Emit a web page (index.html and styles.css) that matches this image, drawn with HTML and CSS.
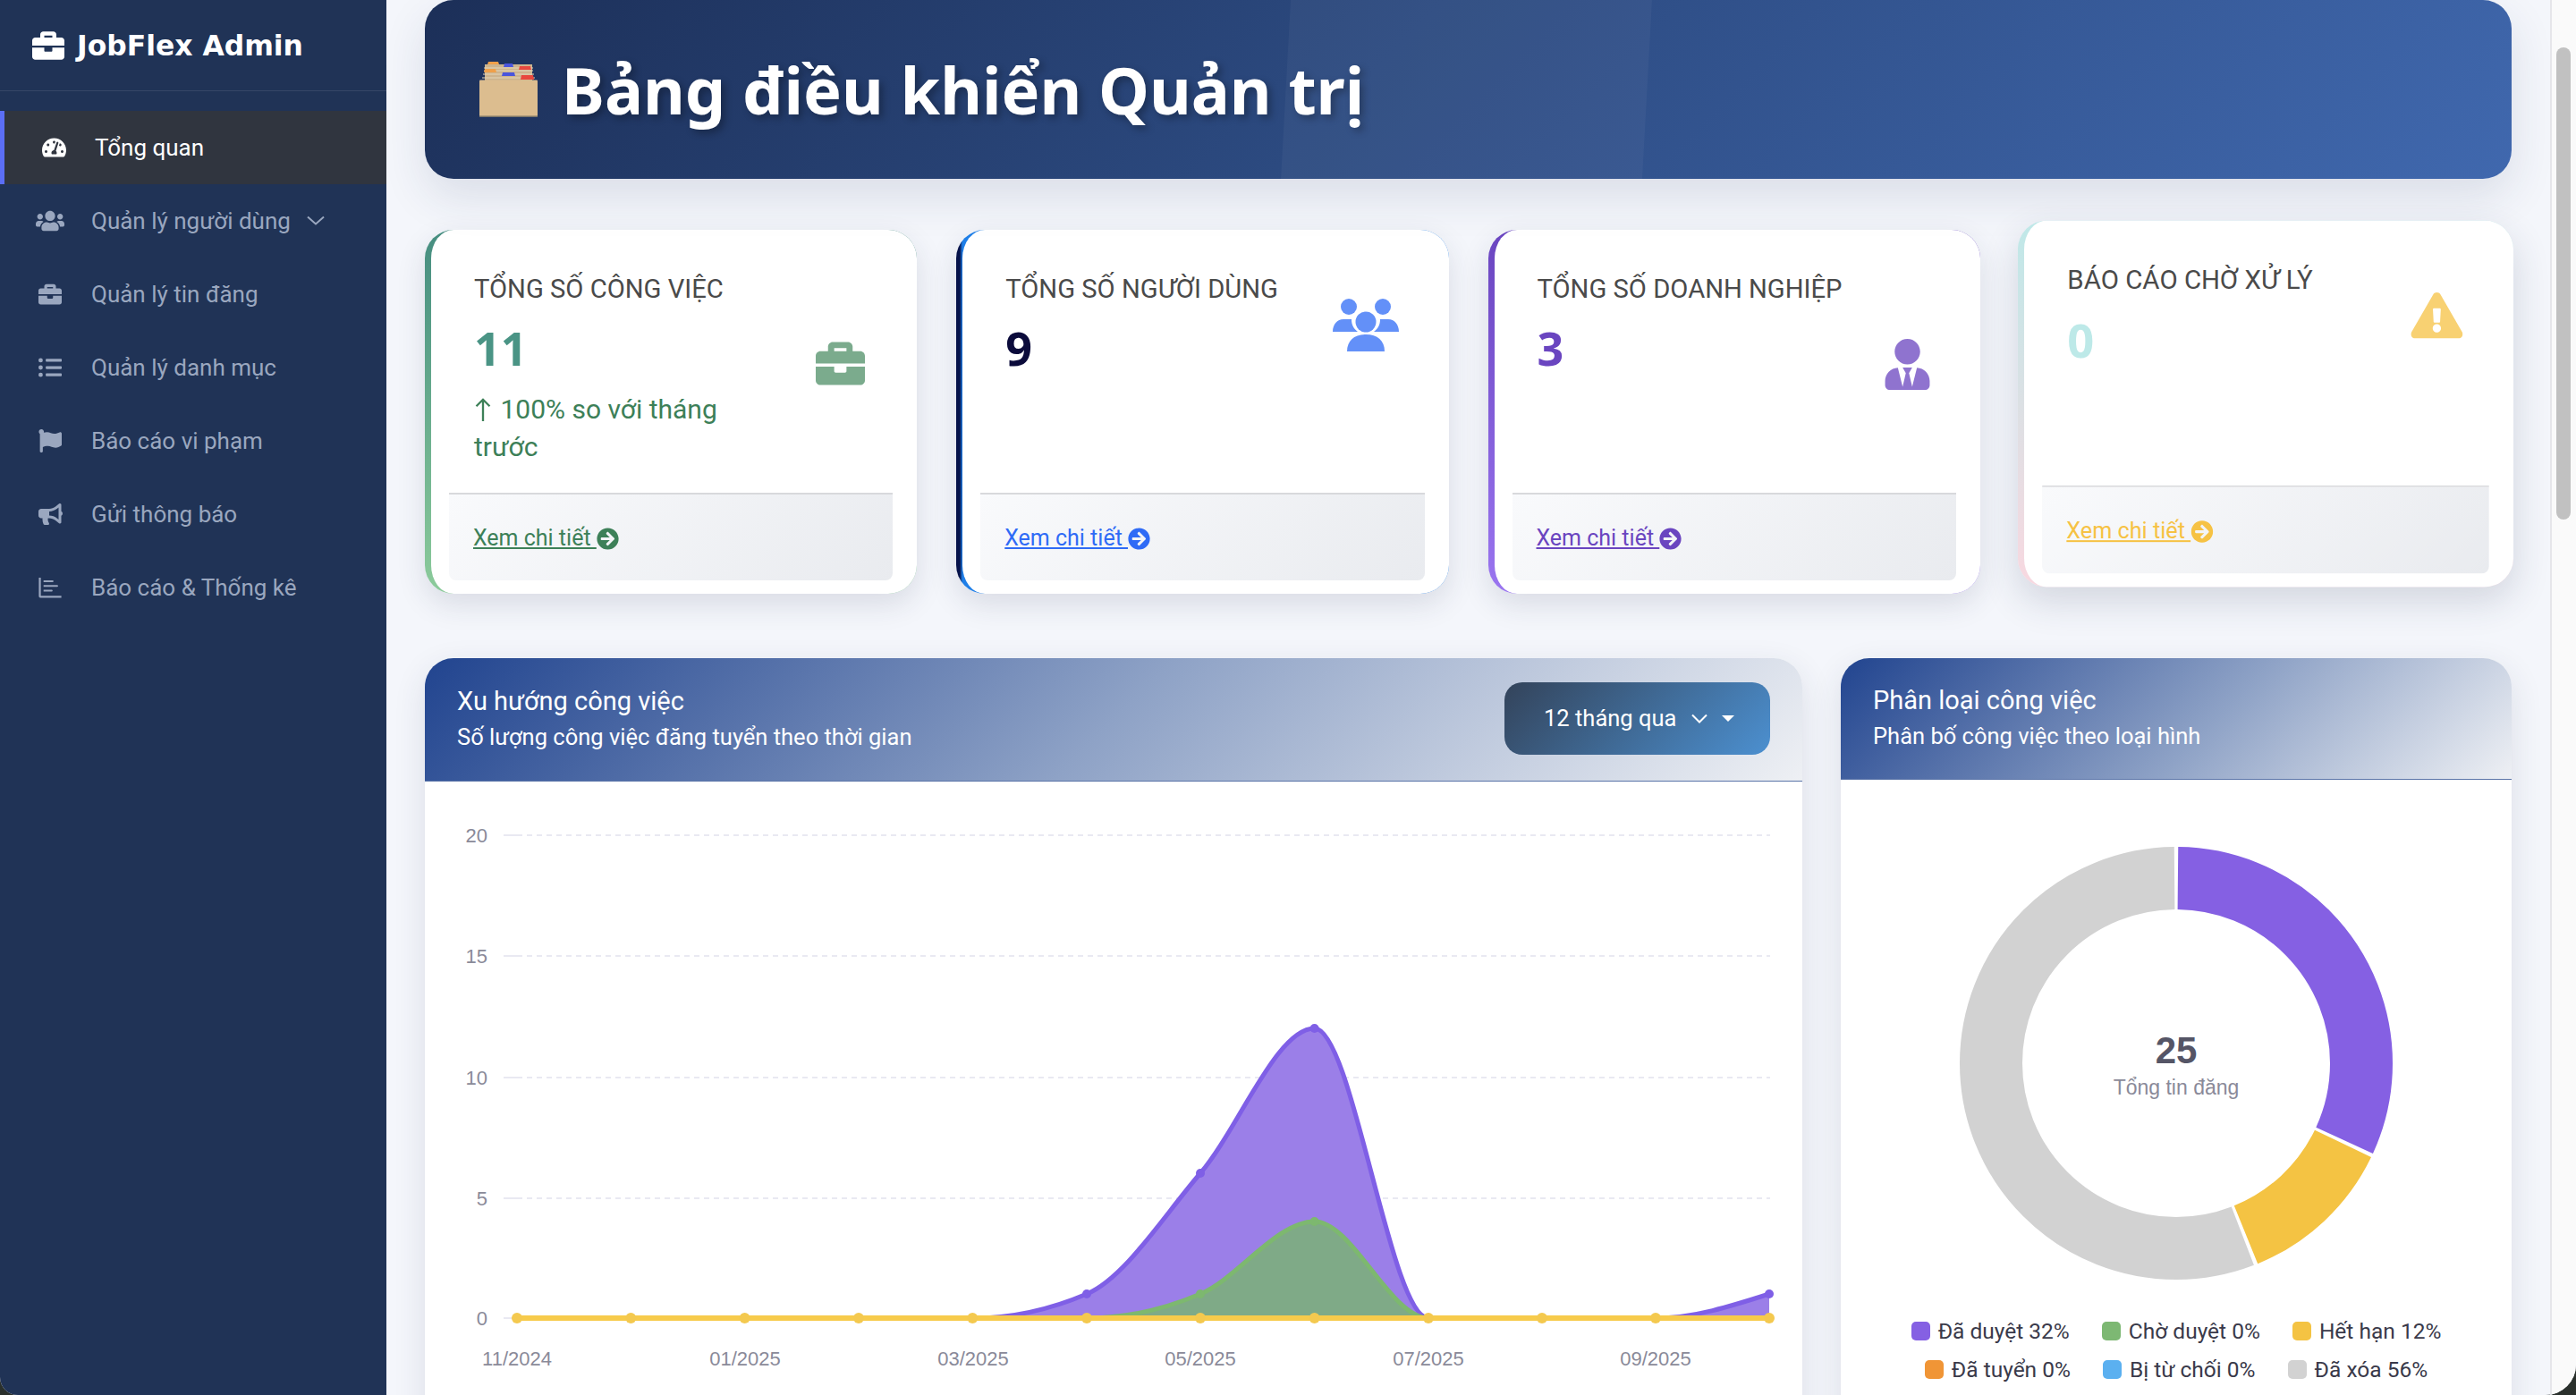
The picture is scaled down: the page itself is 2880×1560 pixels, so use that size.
FILE: index.html
```html
<!DOCTYPE html>
<html lang="vi">
<head>
    <meta charset="UTF-8">
    <meta name="viewport" content="width=device-width, initial-scale=1.0">
    <title>JobFlex Admin</title>
    <link rel="stylesheet" href="styles.css">
</head>
<body>
<div class="app">

    <!-- Sidebar -->
    <aside class="sidebar">
        <div class="brand">
            <svg class="brand-icon" viewBox="0 0 512 512"><path d="M320 336c0 8.84-7.16 16-16 16h-96c-8.84 0-16-7.16-16-16v-48H0v144c0 25.6 22.4 48 48 48h416c25.6 0 48-22.4 48-48V288H320v48zm144-208h-80V80c0-25.6-22.4-48-48-48H176c-25.6 0-48 22.4-48 48v48H48c-25.6 0-48 22.4-48 48v80h512v-80c0-25.6-22.4-48-48-48zm-144 0H192V96h128v32z"/></svg>
            <span class="brand-name">JobFlex Admin</span>
        </div>
        <nav class="nav">
            <a class="nav-item active" href="#">
                <span class="nav-icon"><svg class="ico-gauge" viewBox="0 0 576 512"><path d="M288 32C128.94 32 0 160.94 0 320c0 52.8 14.25 102.26 39.06 144.8 5.61 9.62 16.3 15.2 27.44 15.2h443c11.14 0 21.83-5.58 27.44-15.2C561.75 422.26 576 372.8 576 320c0-159.06-128.94-288-288-288zm0 64c14.71 0 26.58 10.13 30.32 23.65-1.11 2.26-2.64 4.23-3.45 6.67l-9.22 27.67c-5.13 3.49-10.97 6.01-17.64 6.01-17.67 0-32-14.33-32-32S270.33 96 288 96zM96 384c-17.67 0-32-14.33-32-32s14.33-32 32-32 32 14.33 32 32-14.33 32-32 32zm48-160c-17.67 0-32-14.33-32-32s14.33-32 32-32 32 14.33 32 32-14.33 32-32 32zm246.77-72.41l-61.33 184C343.13 347.33 352 364.54 352 384c0 11.72-3.38 22.55-8.88 32H232.88c-5.5-9.45-8.88-20.28-8.88-32 0-33.94 26.5-61.43 59.9-63.59l61.34-184.01c4.17-12.56 17.73-19.45 30.36-15.17 12.57 4.19 19.35 17.79 15.17 30.36zm14.66 57.2l15.52-46.55c3.47-1.29 7.13-2.23 11.05-2.23 17.67 0 32 14.33 32 32s-14.33 32-32 32c-11.38-.01-20.89-6.28-26.57-15.22zM480 384c-17.67 0-32-14.33-32-32s14.33-32 32-32 32 14.33 32 32-14.33 32-32 32z"/></svg></span>
                Tổng quan
            </a>
            <a class="nav-item" href="#">
                <span class="nav-icon"><svg class="ico-users" viewBox="0 0 640 512"><path d="M96 224c35.3 0 64-28.7 64-64s-28.7-64-64-64-64 28.7-64 64 28.7 64 64 64zm448 0c35.3 0 64-28.7 64-64s-28.7-64-64-64-64 28.7-64 64 28.7 64 64 64zm32 32h-64c-17.6 0-33.5 7.1-45.1 18.6 40.3 22.1 68.9 62 75.1 109.4h66c17.7 0 32-14.3 32-32v-32c0-35.3-28.7-64-64-64zm-256 0c61.9 0 112-50.1 112-112S381.9 32 320 32 208 82.1 208 144s50.1 112 112 112zm76.8 32h-8.3c-20.8 10-43.9 16-68.5 16s-47.6-6-68.5-16h-8.3C179.6 288 128 339.6 128 403.2V432c0 26.5 21.5 48 48 48h288c26.5 0 48-21.5 48-48v-28.8c0-63.6-51.6-115.2-115.2-115.2zm-223.7-13.4C161.5 263.1 145.6 256 128 256H64c-35.3 0-64 28.7-64 64v32c0 17.7 14.3 32 32 32h65.9c6.3-47.4 34.9-87.3 75.2-109.4z"/></svg></span>
                Quản lý người dùng
                <svg class="nav-chevron" viewBox="0 0 20 12"><path d="M1 1.5l9 8 9-8"/></svg>
            </a>
            <a class="nav-item" href="#">
                <span class="nav-icon"><svg class="ico-square" viewBox="0 0 512 512"><path d="M320 336c0 8.84-7.16 16-16 16h-96c-8.84 0-16-7.16-16-16v-48H0v144c0 25.6 22.4 48 48 48h416c25.6 0 48-22.4 48-48V288H320v48zm144-208h-80V80c0-25.6-22.4-48-48-48H176c-25.6 0-48 22.4-48 48v48H48c-25.6 0-48 22.4-48 48v80h512v-80c0-25.6-22.4-48-48-48zm-144 0H192V96h128v32z"/></svg></span>
                Quản lý tin đăng
            </a>
            <a class="nav-item" href="#">
                <span class="nav-icon"><svg class="ico-square" viewBox="0 0 512 512"><path d="M48 48a48 48 0 1 0 48 48 48 48 0 0 0-48-48zm0 160a48 48 0 1 0 48 48 48 48 0 0 0-48-48zm0 160a48 48 0 1 0 48 48 48 48 0 0 0-48-48zm448 16H176a16 16 0 0 0-16 16v32a16 16 0 0 0 16 16h320a16 16 0 0 0 16-16v-32a16 16 0 0 0-16-16zm0-320H176a16 16 0 0 0-16 16v32a16 16 0 0 0 16 16h320a16 16 0 0 0 16-16V80a16 16 0 0 0-16-16zm0 160H176a16 16 0 0 0-16 16v32a16 16 0 0 0 16 16h320a16 16 0 0 0 16-16v-32a16 16 0 0 0-16-16z"/></svg></span>
                Quản lý danh mục
            </a>
            <a class="nav-item" href="#">
                <span class="nav-icon"><svg class="ico-square" viewBox="0 0 512 512"><path d="M349.565 98.783C295.978 98.783 251.721 64 184.348 64c-24.955 0-47.309 4.384-68.045 12.013a55.947 55.947 0 0 0 3.586-23.562C118.117 24.015 94.806 1.206 66.338.048 34.345-1.254 8 24.296 8 56c0 19.026 9.497 35.825 24 45.945V488c0 13.255 10.745 24 24 24h16c13.255 0 24-10.745 24-24v-94.4c28.311-12.064 63.582-22.122 114.435-22.122 53.588 0 97.844 34.783 165.217 34.783 48.169 0 86.667-16.294 122.505-40.858C506.84 359.452 512 349.571 512 339.045v-243.1c0-23.393-24.269-38.87-45.485-29.016-34.338 15.948-76.454 31.854-116.95 31.854z"/></svg></span>
                Báo cáo vi phạm
            </a>
            <a class="nav-item" href="#">
                <span class="nav-icon"><svg class="ico-wide" viewBox="0 0 576 512"><path d="M576 240c0-23.63-12.95-44.04-32-55.12V32.01C544 23.26 537.02 0 512 0c-7.12 0-14.19 2.38-19.98 7.02l-85.03 68.03C364.28 109.19 310.66 128 256 128H64c-35.35 0-64 28.65-64 64v96c0 35.35 28.65 64 64 64h33.7c-1.39 10.48-2.18 21.14-2.18 32 0 39.77 9.26 77.35 25.56 110.94 5.19 10.69 16.52 17.06 28.4 17.06h74.28c26.05 0 41.69-29.84 25.9-50.56-16.4-21.52-26.15-48.36-26.15-77.44 0-11.11 1.62-21.79 4.41-32H256c54.66 0 108.28 18.81 150.98 52.95l85.03 68.03a32.023 32.023 0 0 0 19.98 7.02c24.92 0 32-22.78 32-32V295.13C563.05 284.04 576 263.63 576 240zm-96 141.42l-33.05-26.44C392.95 311.78 325.12 288 256 288v-96c69.12 0 136.95-23.78 190.95-66.98L480 98.58v282.84z"/></svg></span>
                Gửi thông báo
            </a>
            <a class="nav-item" href="#">
                <span class="nav-icon"><svg class="ico-square" viewBox="0 0 512 512"><path d="M8 40h44v400h452v40H40a32 32 0 0 1-32-32zM112 96h200a20 20 0 0 1 0 40H112zM112 200h300a20 20 0 0 1 0 40H112zM112 304h180a20 20 0 0 1 0 40H112z"/></svg></span>
                Báo cáo &amp; Thống kê
            </a>
        </nav>
    </aside>

    <main class="content">

        <!-- Tiêu đề trang -->
        <header class="page-header">
            <svg class="page-emoji" viewBox="0 0 65 62">
                <rect x="6" y="3" width="53" height="18" fill="#cdb48e"/>
                <path d="M5 7h55M5 10h55M4 14h57M3 18h59" stroke="#e6d6b8" stroke-width="1.2"/>
                <path d="M9 3l1-3h11l1 3z" fill="#f0a04a"/>
                <path d="M27 6l1-4h9l1 4z" fill="#4a55dc"/>
                <path d="M44 9l1-4h12l1 4z" fill="#e8483e"/>
                <path d="M5 12l1-4h12l1 4z" fill="#f0a04a"/>
                <path d="M25 16l1-4h13l1 4z" fill="#4a55dc"/>
                <path d="M46 20l1-5h13l1 5z" fill="#e8483e"/>
                <rect y="20.5" width="65" height="41" rx="1" fill="#dcbd8f"/>
                <rect y="60.5" width="65" height="1.5" fill="#7a7468"/>
            </svg>
            <h1 class="page-title">Bảng điều khiển Quản trị</h1>
        </header>

        <!-- Thẻ thống kê -->
        <section class="stats">
            <div class="stat-card card-jobs">
                <div class="stat-body">
                    <div class="stat-text">
                        <div class="stat-label">TỔNG SỐ CÔNG VIỆC</div>
                        <div class="stat-value">11</div>
                        <div class="stat-change">
                            <svg class="stat-arrow" viewBox="0 0 20 30"><path d="M10 29V3M2 11l8-8 8 8"/></svg>
                            100% so với tháng trước
                        </div>
                    </div>
                    <svg class="stat-icon icon-job" viewBox="0 0 512 512"><path d="M320 336c0 8.84-7.16 16-16 16h-96c-8.84 0-16-7.16-16-16v-48H0v144c0 25.6 22.4 48 48 48h416c25.6 0 48-22.4 48-48V288H320v48zm144-208h-80V80c0-25.6-22.4-48-48-48H176c-25.6 0-48 22.4-48 48v48H48c-25.6 0-48 22.4-48 48v80h512v-80c0-25.6-22.4-48-48-48zm-144 0H192V96h128v32z"/></svg>
                </div>
                <div class="stat-footer">
                    <a class="stat-link" href="#">Xem chi tiết <svg class="link-icon" viewBox="0 0 512 512"><path d="M256 8c137 0 248 111 248 248S393 504 256 504 8 393 8 256 119 8 256 8zm-28.9 143.6l75.5 72.4H120c-13.3 0-24 10.7-24 24v16c0 13.3 10.7 24 24 24h182.6l-75.5 72.4c-9.7 9.3-9.9 24.8-.4 34.3l11 10.9c9.4 9.4 24.6 9.4 33.9 0L404.3 273c9.4-9.4 9.4-24.6 0-33.9L271.6 106.3c-9.4-9.4-24.6-9.4-33.9 0l-11 10.9c-9.5 9.6-9.3 25.1.4 34.4z"/></svg></a>
                </div>
            </div>

            <div class="stat-card card-users">
                <div class="stat-body">
                    <div class="stat-text">
                        <div class="stat-label">TỔNG SỐ NGƯỜI DÙNG</div>
                        <div class="stat-value">9</div>
                    </div>
                    <svg class="stat-icon icon-users" viewBox="0 0 74 59">
                        <circle cx="18" cy="9" r="9"/>
                        <circle cx="56" cy="9" r="9"/>
                        <circle cx="37" cy="26" r="11.5"/>
                        <path d="M0 37C0 29 5 23 12 23H21C21 29 23 33 28 37Z"/>
                        <path d="M74 37C74 29 69 23 62 23H53C53 29 51 33 46 37Z"/>
                        <path d="M16 59C16 47 24 40 37 40C50 40 58 47 58 59Z"/>
                    </svg>
                </div>
                <div class="stat-footer">
                    <a class="stat-link" href="#">Xem chi tiết <svg class="link-icon" viewBox="0 0 512 512"><path d="M256 8c137 0 248 111 248 248S393 504 256 504 8 393 8 256 119 8 256 8zm-28.9 143.6l75.5 72.4H120c-13.3 0-24 10.7-24 24v16c0 13.3 10.7 24 24 24h182.6l-75.5 72.4c-9.7 9.3-9.9 24.8-.4 34.3l11 10.9c9.4 9.4 24.6 9.4 33.9 0L404.3 273c9.4-9.4 9.4-24.6 0-33.9L271.6 106.3c-9.4-9.4-24.6-9.4-33.9 0l-11 10.9c-9.5 9.6-9.3 25.1.4 34.4z"/></svg></a>
                </div>
            </div>

            <div class="stat-card card-companies">
                <div class="stat-body">
                    <div class="stat-text">
                        <div class="stat-label">TỔNG SỐ DOANH NGHIỆP</div>
                        <div class="stat-value">3</div>
                        <div class="stat-change stat-change-empty"></div>
                    </div>
                    <svg class="stat-icon icon-tie" viewBox="0 0 448 512"><path d="M224 256c70.7 0 128-57.3 128-128S294.7 0 224 0 96 57.3 96 128s57.3 128 128 128zm95.8 32.6L272 480l-32-136 32-56h-96l32 56-32 136-47.8-191.4C56.9 292 0 350.3 0 422.4V464c0 26.5 21.5 48 48 48h352c26.5 0 48-21.5 48-48v-41.6c0-72.1-56.9-130.4-128.2-133.8z"/></svg>
                </div>
                <div class="stat-footer">
                    <a class="stat-link" href="#">Xem chi tiết <svg class="link-icon" viewBox="0 0 512 512"><path d="M256 8c137 0 248 111 248 248S393 504 256 504 8 393 8 256 119 8 256 8zm-28.9 143.6l75.5 72.4H120c-13.3 0-24 10.7-24 24v16c0 13.3 10.7 24 24 24h182.6l-75.5 72.4c-9.7 9.3-9.9 24.8-.4 34.3l11 10.9c9.4 9.4 24.6 9.4 33.9 0L404.3 273c9.4-9.4 9.4-24.6 0-33.9L271.6 106.3c-9.4-9.4-24.6-9.4-33.9 0l-11 10.9c-9.5 9.6-9.3 25.1.4 34.4z"/></svg></a>
                </div>
            </div>

            <div class="stat-card card-reports">
                <div class="stat-body">
                    <div class="stat-text">
                        <div class="stat-label">BÁO CÁO CHỜ XỬ LÝ</div>
                        <div class="stat-value">0</div>
                    </div>
                    <svg class="stat-icon icon-warn" viewBox="0 0 576 512"><path d="M569.517 440.013C587.975 472.007 564.806 512 527.94 512H48.054c-36.937 0-59.999-40.055-41.577-71.987L246.423 24.035c18.467-32.009 64.72-31.951 83.154 0l239.94 416.006zM288 354c-25.405 0-46 20.595-46 46s20.595 46 46 46 46-20.595 46-46-20.595-46-46-46zm-43.673-165.346l7.418 136c.347 6.364 5.609 11.346 11.982 11.346h48.546c6.373 0 11.635-4.982 11.982-11.346l7.418-136c.375-6.874-5.098-12.654-11.982-12.654h-63.383c-6.884 0-12.356 5.78-11.981 12.654z"/></svg>
                </div>
                <div class="stat-footer">
                    <a class="stat-link" href="#">Xem chi tiết <svg class="link-icon" viewBox="0 0 512 512"><path d="M256 8c137 0 248 111 248 248S393 504 256 504 8 393 8 256 119 8 256 8zm-28.9 143.6l75.5 72.4H120c-13.3 0-24 10.7-24 24v16c0 13.3 10.7 24 24 24h182.6l-75.5 72.4c-9.7 9.3-9.9 24.8-.4 34.3l11 10.9c9.4 9.4 24.6 9.4 33.9 0L404.3 273c9.4-9.4 9.4-24.6 0-33.9L271.6 106.3c-9.4-9.4-24.6-9.4-33.9 0l-11 10.9c-9.5 9.6-9.3 25.1.4 34.4z"/></svg></a>
                </div>
            </div>
        </section>

        <!-- Biểu đồ -->
        <section class="charts">
            <div class="panel">
                <div class="panel-header panel-header-tall">
                    <div>
                        <div class="panel-title">Xu hướng công việc</div>
                        <div class="panel-sub">Số lượng công việc đăng tuyển theo thời gian</div>
                    </div>
                    <button class="range-btn">
                        12 tháng qua
                        <svg class="range-chevron" viewBox="0 0 18 11"><path d="M1 1.5l8 8 8-8"/></svg>
                        <span class="range-caret"></span>
                    </button>
                </div>
                <svg class="trend-chart" viewBox="475 874 1540 726">
                    <g class="grid">
                        <path class="grid-line" d="M578 934H1979M578 1069H1979M578 1205H1979M578 1340H1979"/>
                        <path class="grid-tick" d="M563 934H578M563 1069H578M563 1205H578M563 1340H578M563 1474H578"/>
                    </g>
                    <g class="axis-y">
                        <text x="545" y="942">20</text>
                        <text x="545" y="1077">15</text>
                        <text x="545" y="1213">10</text>
                        <text x="545" y="1348">5</text>
                        <text x="545" y="1482">0</text>
                    </g>
                    <g class="axis-x">
                        <text x="578" y="1527">11/2024</text>
                        <text x="833" y="1527">01/2025</text>
                        <text x="1088" y="1527">03/2025</text>
                        <text x="1342" y="1527">05/2025</text>
                        <text x="1597" y="1527">07/2025</text>
                        <text x="1851" y="1527">09/2025</text>
                    </g>
                    <path class="area-purple" d="M1088 1474C1130.4 1474 1172.9 1465 1215 1447C1257.4 1429 1299.6 1361.5 1342 1312C1384.4 1262.5 1427.2 1150 1469.6 1150C1512 1150 1554.6 1474 1597 1474ZM1851 1474C1893.4 1474 1935.9 1460.5 1978 1447V1474Z"/>
                    <path class="line-purple" d="M1088 1474C1130.4 1474 1172.9 1465 1215 1447C1257.4 1429 1299.6 1361.5 1342 1312C1384.4 1262.5 1427.2 1150 1469.6 1150C1512 1150 1554.6 1474 1597 1474M1851 1474C1893.4 1474 1935.9 1460.5 1978 1447"/>
                    <path class="area-green" d="M1215 1474C1257.4 1474 1299.6 1465 1342 1447C1384.4 1429 1427.2 1366 1469.6 1366C1512 1366 1554.6 1474 1597 1474Z"/>
                    <path class="line-green" d="M1215 1474C1257.4 1474 1299.6 1465 1342 1447C1384.4 1429 1427.2 1366 1469.6 1366C1512 1366 1554.6 1474 1597 1474"/>
                    <g class="dots-purple">
                        <circle cx="1215" cy="1447" r="5"/><circle cx="1342" cy="1312" r="5"/><circle cx="1469.6" cy="1150" r="5"/><circle cx="1978" cy="1447" r="5"/>
                    </g>
                    <g class="dots-green">
                        <circle cx="1342" cy="1447" r="5"/><circle cx="1469.6" cy="1366" r="5"/>
                    </g>
                    <path class="line-yellow" d="M578 1474H1978"/>
                    <g class="dots-yellow">
                        <circle cx="578" cy="1474" r="6"/><circle cx="705.3" cy="1474" r="6"/><circle cx="832.6" cy="1474" r="6"/><circle cx="960" cy="1474" r="6"/><circle cx="1087.3" cy="1474" r="6"/><circle cx="1215" cy="1474" r="6"/><circle cx="1342" cy="1474" r="6"/><circle cx="1469.6" cy="1474" r="6"/><circle cx="1597" cy="1474" r="6"/><circle cx="1724" cy="1474" r="6"/><circle cx="1851" cy="1474" r="6"/><circle cx="1978" cy="1474" r="6"/>
                    </g>
                </svg>
            </div>

            <div class="panel">
                <div class="panel-header">
                    <div>
                        <div class="panel-title">Phân loại công việc</div>
                        <div class="panel-sub">Phân bố công việc theo loại hình</div>
                    </div>
                </div>
                <div class="donut-wrap">
                    <svg class="donut" viewBox="0 0 500 500">
                        <circle class="seg seg-purple" cx="250" cy="250" r="207" pathLength="100"/>
                        <circle class="seg seg-yellow" cx="250" cy="250" r="207" pathLength="100"/>
                        <circle class="seg seg-gray" cx="250" cy="250" r="207" pathLength="100"/>
                        <text class="donut-num" x="250" y="250">25</text>
                        <text class="donut-cap" x="250" y="285">Tổng tin đăng</text>
                    </svg>
                    <div class="legend">
                        <div class="legend-item"><span class="swatch sw-purple"></span>Đã duyệt 32%</div>
                        <div class="legend-item"><span class="swatch sw-green"></span>Chờ duyệt 0%</div>
                        <div class="legend-item"><span class="swatch sw-yellow"></span>Hết hạn 12%</div>
                        <div class="legend-item"><span class="swatch sw-orange"></span>Đã tuyển 0%</div>
                        <div class="legend-item"><span class="swatch sw-blue"></span>Bị từ chối 0%</div>
                        <div class="legend-item"><span class="swatch sw-gray"></span>Đã xóa 56%</div>
                    </div>
                </div>
            </div>
        </section>
    </main>

    <div class="scrollbar"><div class="scrollbar-thumb"></div></div>
</div>
</body>
</html>
```

FILE: styles.css
```css
:root {
    --navy: #203356;
    --page-bg: #f4f6fb;
    --ui-font: Roboto, "Noto Sans", sans-serif;
    --chart-font: "Liberation Sans", Arial, sans-serif;
}

* {
    box-sizing: border-box;
    margin: 0;
    padding: 0;
}

html, body {
    height: 100%;
}

body {
    background: #2a302c;
    font-family: var(--ui-font);
    overflow: hidden;
}

.app {
    display: flex;
    height: 100vh;
    overflow: hidden;
    background: var(--page-bg);
    border-radius: 0 0 34px 20px;
}

/* Sidebar */
.sidebar {
    width: 432px;
    flex-shrink: 0;
    background: var(--navy);
}

.brand {
    display: flex;
    align-items: center;
    gap: 14px;
    height: 102px;
    padding-left: 36px;
    border-bottom: 1px solid rgba(255, 255, 255, 0.1);
}

.brand-icon {
    width: 36px;
    height: 36px;
    fill: #fff;
}

.brand-name {
    font-family: "DejaVu Sans", sans-serif;
    font-size: 31.4px;
    font-weight: 700;
    color: #fff;
}

.nav {
    margin-top: 22px;
}

.nav-item {
    display: flex;
    align-items: center;
    height: 82px;
    padding-left: 36px;
    font-size: 26px;
    color: #9aa7bf;
    text-decoration: none;
}

.nav-item.active {
    padding-left: 35px;
    border-left: 5px solid #5b6ef5;
    background: #30353f;
    color: #fff;
}

.nav-icon {
    display: flex;
    justify-content: center;
    width: 40px;
    margin-right: 26px;
    fill: currentColor;
}

.ico-square { width: 26px; height: 26px; }
.ico-wide { width: 27px; height: 26px; }
.ico-gauge { width: 27px; height: 26px; }
.ico-users { width: 32px; height: 26px; }

.nav-chevron {
    width: 20px;
    height: 12px;
    margin-left: 18px;
    fill: none;
    stroke: currentColor;
    stroke-width: 2;
}

/* Main */
.content {
    flex: 1;
    min-width: 0;
    padding: 0 43px;
}

.page-header {
    position: relative;
    display: flex;
    align-items: center;
    gap: 27px;
    height: 200px;
    padding-left: 61px;
    border-radius: 32px;
    background: linear-gradient(135deg, #1c2f58 0%, #2c4a80 45%, #4068ae 100%);
    box-shadow: 0 20px 50px rgba(30, 50, 90, 0.12);
    overflow: hidden;
}

/* dải sáng chéo */
.page-header::after {
    content: "";
    position: absolute;
    top: 0;
    bottom: 0;
    left: 957px;
    width: 415px;
    background: rgba(255, 255, 255, 0.04);
    clip-path: polygon(11px 0, 100% 0, calc(100% - 11px) 100%, 0 100%);
}

.page-emoji {
    width: 65px;
    height: 62px;
    flex-shrink: 0;
}

.page-title {
    font-family: "Noto Sans", sans-serif;
    font-size: 72px;
    font-weight: 700;
    color: #fff;
    text-shadow: 4px 4px 8px rgba(0, 0, 0, 0.3);
}

/* Stat cards */
.stats {
    display: grid;
    grid-template-columns: repeat(4, 1fr);
    gap: 44px;
    margin-top: 57px;
}

.stat-card {
    display: flex;
    flex-direction: column;
    height: 407px;
    padding: 45px 27px 15px 20px;
    border-left: 7px solid transparent;
    border-radius: 32px;
    background: linear-gradient(#fff, #fff) padding-box, var(--bar) border-box;
    box-shadow: 0 12px 32px rgba(40, 50, 80, 0.13);
}

.card-jobs {
    --bar: linear-gradient(180deg, #458d80, #8ccb9b);
    --tone: #3d8058;
    --val: #4a9485;
}

.card-users {
    --bar: linear-gradient(90deg, #06124a 4px, #1f7fe8 7px);
    --tone: #2f6bf6;
    --val: #0b0b3b;
}

.card-companies {
    --bar: linear-gradient(180deg, #6a45c0, #9a75f0);
    --tone: #6a45c0;
    --val: #6a45c0;
}

.card-reports {
    --bar: linear-gradient(180deg, #bfe8e8, #f8d8e0);
    --tone: #f6c244;
    --val: #bde9e8;
    transform: translateY(-9px) scale(1.0075);
    box-shadow: 0 16px 40px rgba(40, 50, 80, 0.16);
}

.stat-body {
    display: flex;
    align-items: center;
    justify-content: space-between;
    padding: 0 29px 0 28px;
}

.stat-text {
    width: 345px;
}

.stat-label {
    font-size: 29.2px;
    line-height: 42px;
    color: #4a4a4a;
    white-space: nowrap;
}

.stat-value {
    margin-top: 15px;
    margin-bottom: 5px;
    font-family: "Noto Sans", sans-serif;
    font-size: 52px;
    font-weight: 700;
    line-height: 60px;
    color: var(--val);
}

.stat-change {
    max-width: 300px;
    margin-top: 18px;
    font-size: 30px;
    line-height: 42px;
    color: var(--tone);
}

.stat-change-empty {
    height: 84px;
}

.stat-arrow {
    width: 20px;
    height: 28px;
    margin-right: 2px;
    vertical-align: -4px;
    fill: none;
    stroke: currentColor;
    stroke-width: 2.5;
}

.stat-icon {
    opacity: 0.75;
    flex-shrink: 0;
}

.icon-job { width: 59px; height: 55px; margin-bottom: 10px; fill: #4f9068; }
.icon-users { width: 74px; height: 59px; fill: #2f6bf6; }
.icon-tie { width: 51px; height: 57px; margin-bottom: 8px; fill: #6a45c0; }
.icon-warn { width: 58px; height: 51px; margin-bottom: 2px; fill: #f6c244; }

.stat-footer {
    display: flex;
    align-items: center;
    height: 98px;
    margin-top: auto;
    padding: 0 27px;
    border-top: 2px solid #d8d9dc;
    border-radius: 0 0 8px 8px;
    background: linear-gradient(135deg, #f9fafc, #e9ebef);
}

.stat-link {
    font-size: 25px;
    color: var(--tone);
}

.link-icon {
    width: 25px;
    height: 25px;
    vertical-align: -5px;
    fill: currentColor;
}

/* Charts */
.charts {
    display: grid;
    grid-template-columns: 1540px 1fr;
    gap: 43px;
    margin-top: 72px;
}

.panel {
    height: 900px;
    border-radius: 32px;
    background: #fff;
    box-shadow: 0 12px 36px rgba(40, 50, 80, 0.12);
    overflow: hidden;
}

.panel-header {
    display: flex;
    align-items: center;
    justify-content: space-between;
    height: 136px;
    padding: 0 36px 3px;
    border-bottom: 1px solid #5a74a8;
    background: linear-gradient(135deg, #21448f 0%, #8ea2c6 55%, #eef0f4 100%);
}

.panel-header-tall {
    height: 138px;
    background: linear-gradient(135deg, #21448f 0%, #8ea2c6 50%, #eef0f4 100%);
}

.panel-title {
    font-size: 29px;
    line-height: 42px;
    color: #fff;
}

.panel-sub {
    font-size: 25.5px;
    line-height: 38px;
    color: #fff;
}

.range-btn {
    display: flex;
    align-items: center;
    width: 297px;
    height: 81px;
    padding-left: 44px;
    border: none;
    border-radius: 20px;
    background: linear-gradient(135deg, #33435a, #4c90d0);
    font-family: var(--ui-font);
    font-size: 25.5px;
    color: #fff;
}

.range-chevron {
    width: 18px;
    height: 11px;
    margin-left: 17px;
    fill: none;
    stroke: #fff;
    stroke-width: 2;
}

.range-caret {
    width: 0;
    height: 0;
    margin-left: 16px;
    border-left: 7px solid transparent;
    border-right: 7px solid transparent;
    border-top: 7px solid #fff;
}

.trend-chart {
    display: block;
    width: 1540px;
    height: 726px;
}

.grid-line {
    fill: none;
    stroke: #e9e9f2;
    stroke-width: 2;
    stroke-dasharray: 6 5;
}

.grid-tick {
    fill: none;
    stroke: #e9e9f2;
    stroke-width: 2;
}

.axis-y text,
.axis-x text {
    font-family: var(--chart-font);
    font-size: 22px;
    fill: #8a8a99;
}

.axis-y text { text-anchor: end; }
.axis-x text { text-anchor: middle; }

.area-purple { fill: #9b7fe8; }
.line-purple { fill: none; stroke: #7f5fe6; stroke-width: 5; }
.area-green { fill: #7faa87; }
.line-green { fill: none; stroke: #7db86f; stroke-width: 5; }
.line-yellow { fill: none; stroke: #f7cb4b; stroke-width: 6; }
.dots-purple { fill: #7f5fe6; }
.dots-green { fill: #7db86f; }
.dots-yellow { fill: #f4c94f; }

/* Donut */
.donut-wrap {
    display: flex;
    flex-direction: column;
    align-items: center;
    padding-top: 67px;
}

.donut {
    display: block;
    width: 500px;
    height: 500px;
}

.seg {
    fill: none;
    stroke-width: 70;
    transform: rotate(-90deg);
    transform-origin: 250px 250px;
}

.seg-purple { stroke: #8560e3; stroke-dasharray: 31.7 68.3; stroke-dashoffset: -0.15; }
.seg-yellow { stroke: #f4c343; stroke-dasharray: 11.7 88.3; stroke-dashoffset: -32.15; }
.seg-gray { stroke: #d2d2d2; stroke-dasharray: 55.7 44.3; stroke-dashoffset: -44.15; }

.donut-num {
    font-family: var(--chart-font);
    font-size: 42px;
    font-weight: 700;
    text-anchor: middle;
    fill: #555566;
}

.donut-cap {
    font-family: var(--chart-font);
    font-size: 23px;
    text-anchor: middle;
    fill: #8a8a99;
}

.legend {
    display: flex;
    flex-wrap: wrap;
    justify-content: center;
    column-gap: 36px;
    margin-top: 28px;
}

.legend-item {
    display: flex;
    align-items: center;
    font-size: 24.5px;
    line-height: 43px;
    color: #3a3a4a;
}

.swatch {
    width: 21px;
    height: 21px;
    margin-right: 9px;
    border-radius: 5px;
}

.sw-purple { background: #8560e3; }
.sw-green { background: #7db873; }
.sw-yellow { background: #f4c343; }
.sw-orange { background: #f09536; }
.sw-blue { background: #5bb0f0; }
.sw-gray { background: #d2d2d2; }

/* Scrollbar */
.scrollbar {
    width: 29px;
    flex-shrink: 0;
    padding: 53px 0 0 5px;
    border-left: 2px solid #e6e6ea;
    background: #fafafa;
}

.scrollbar-thumb {
    width: 16px;
    height: 528px;
    border-radius: 8px;
    background: #c1c1c1;
}
```
